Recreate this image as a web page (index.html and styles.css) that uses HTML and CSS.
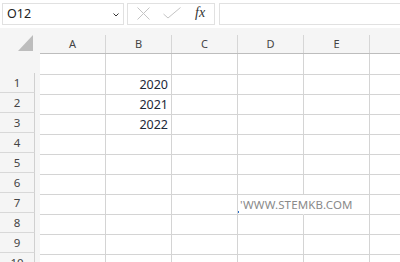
FILE: index.html
```html
<!DOCTYPE html>
<html>
<head>
<meta charset="utf-8">
<link rel="stylesheet" href="styles.css">
</head>
<body>
<div class="toolbar">
  <div class="namebox">
    <span class="nb-text">O12</span>
    <svg class="chev" width="6" height="4" viewBox="0 0 6 4"><path d="M0.5 0.5 L3 3 L5.5 0.5" fill="none" stroke="#333" stroke-width="1"/></svg>
  </div>
  <div class="fbtns">
    <svg class="ico-x" width="13" height="13" viewBox="0 0 13 13"><path d="M0.5 0.5 L12.5 12.5 M12.5 0.5 L0.5 12.5" fill="none" stroke="#c4c4c4" stroke-width="1"/></svg>
    <svg class="ico-ok" width="18" height="12" viewBox="0 0 18 12"><path d="M0.5 7 L5 11 L17.5 0.5" fill="none" stroke="#c4c4c4" stroke-width="1"/></svg>
    <span class="fx">fx</span>
  </div>
  <div class="finput"></div>
</div>
<div class="sheet">
  <div class="colhead">
    <div class="corner"><svg width="15" height="16" viewBox="0 0 15 16"><path d="M15 0 L15 16 L0 16 Z" fill="#bdbdbd"/></svg></div>
    <div class="ch"><span>A</span></div>
    <div class="ch"><span>B</span></div>
    <div class="ch"><span>C</span></div>
    <div class="ch"><span>D</span></div>
    <div class="ch"><span>E</span></div>
    <div class="ch"><span></span></div>
  </div>
  <div class="body">
    <div class="rowheads">
      <div class="rh-spacer"></div>
      <div class="rh">1</div>
      <div class="rh">2</div>
      <div class="rh">3</div>
      <div class="rh">4</div>
      <div class="rh">5</div>
      <div class="rh">6</div>
      <div class="rh">7</div>
      <div class="rh">8</div>
      <div class="rh">9</div>
      <div class="rh">10</div>
    </div>
    <div class="grid">
      <div class="row first"><div class="c"></div><div class="c"></div><div class="c"></div><div class="c"></div><div class="c"></div><div class="c"></div></div>
      <div class="row"><div class="c"></div><div class="c num">2020</div><div class="c"></div><div class="c"></div><div class="c"></div><div class="c"></div></div>
      <div class="row"><div class="c"></div><div class="c num">2021</div><div class="c"></div><div class="c"></div><div class="c"></div><div class="c"></div></div>
      <div class="row"><div class="c"></div><div class="c num">2022</div><div class="c"></div><div class="c"></div><div class="c"></div><div class="c"></div></div>
      <div class="row"><div class="c"></div><div class="c"></div><div class="c"></div><div class="c"></div><div class="c"></div><div class="c"></div></div>
      <div class="row"><div class="c"></div><div class="c"></div><div class="c"></div><div class="c"></div><div class="c"></div><div class="c"></div></div>
      <div class="row"><div class="c"></div><div class="c"></div><div class="c"></div><div class="c"></div><div class="c"></div><div class="c"></div></div>
      <div class="row"><div class="c"></div><div class="c"></div><div class="c"></div><div class="c txt">'WWW.STEMKB.COM</div><div class="c"></div><div class="c"></div></div>
      <div class="row"><div class="c"></div><div class="c"></div><div class="c"></div><div class="c"></div><div class="c"></div><div class="c"></div></div>
      <div class="row"><div class="c"></div><div class="c"></div><div class="c"></div><div class="c"></div><div class="c"></div><div class="c"></div></div>
      <div class="row"><div class="c"></div><div class="c"></div><div class="c"></div><div class="c"></div><div class="c"></div><div class="c"></div></div>
    </div>
  </div>
</div>
</body>
</html>
```
FILE: styles.css
```css
html, body {
  margin: 0;
  padding: 0;
  width: 400px;
  height: 262px;
  overflow: hidden;
  background: #ffffff;
  font-family: "Noto Sans", "Open Sans", sans-serif;
}

.toolbar {
  height: 28px;
  box-sizing: border-box;
  padding-top: 3px;
  padding-left: 2px;
  display: flex;
  background: #ffffff;
}

.namebox {
  width: 122px;
  height: 22px;
  box-sizing: border-box;
  border: 1px solid #e1e1e1;
  display: flex;
  align-items: center;
  padding-left: 4px;
  padding-right: 4px;
}

.nb-text {
  flex: 1;
  font-size: 12.5px;
  color: #222;
  line-height: 20px;
}

.chev {
  display: block;
  margin-top: 1px;
}

.fbtns {
  margin-left: 3px;
  width: 88px;
  height: 22px;
  box-sizing: border-box;
  border: 1px solid #e1e1e1;
  display: flex;
  align-items: center;
  padding-left: 9px;
}

.ico-x {
  display: block;
  margin-top: -2px;
}

.ico-ok {
  display: block;
  margin-left: 13px;
  margin-top: -2px;
}

.fx {
  margin-left: 14px;
  font-family: "Liberation Serif", "DejaVu Serif", serif;
  font-style: italic;
  font-size: 14px;
  color: #333;
  line-height: 20px;
  margin-top: -2px;
}

.finput {
  margin-left: 4px;
  flex: 1;
  height: 22px;
  box-sizing: border-box;
  border: 1px solid #e1e1e1;
  border-right: none;
}

.sheet {
  background: #f5f5f5;
}

.colhead {
  display: flex;
  height: 26px;
}

.corner {
  flex: none;
  width: 40px;
  height: 26px;
  box-sizing: border-box;
  padding-left: 18px;
  padding-top: 7px;
}

.corner svg {
  display: block;
}

.ch {
  flex: none;
  width: 66px;
  height: 26px;
  box-sizing: border-box;
  padding-top: 7px;
  border-bottom: 1px solid #bdbdbd;
}

.ch span {
  display: block;
  height: 18px;
  border-right: 1px solid #d6d6d6;
  text-align: center;
  font-size: 11px;
  line-height: 17px;
  color: #444;
}

.body {
  display: flex;
}

.rowheads {
  flex: none;
  width: 40px;
  background: #f5f5f5;
}

.rh-spacer {
  height: 19px;
}

.rh {
  width: 35px;
  height: 20px;
  box-sizing: border-box;
  border-right: 1px solid #d0d0d0;
  border-bottom: 1px solid #d8d8d8;
  text-align: center;
  font-size: 11.5px;
  line-height: 19px;
  color: #444;
}

.grid {
  flex: none;
  background: #ffffff;
}

.row {
  display: flex;
  height: 20px;
}

.row.first {
  height: 21px;
}

.c {
  flex: none;
  width: 66px;
  box-sizing: border-box;
  border-right: 1px solid #d4d4d4;
  border-bottom: 1px solid #d4d4d4;
  white-space: nowrap;
}

.num {
  text-align: right;
  padding-right: 3px;
  font-size: 12.5px;
  line-height: 19px;
  color: #1c2838;
}

.txt {
  position: relative;
  border-right-color: transparent;
  padding-left: 2px;
  font-size: 11.5px;
  letter-spacing: 0.15px;
  line-height: 19px;
  color: #8a8a8a;
  overflow: visible;
}

.txt::before {
  content: "";
  position: absolute;
  left: 0;
  top: 16px;
  width: 1px;
  height: 2px;
  background: #2a6fc9;
}
```
